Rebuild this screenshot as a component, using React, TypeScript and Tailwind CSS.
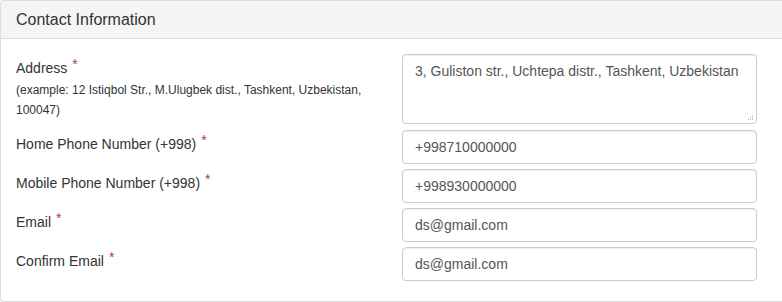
const fields = [
  { label: 'Home Phone Number (+998)', value: '+998710000000' },
  { label: 'Mobile Phone Number (+998)', value: '+998930000000' },
  { label: 'Email', value: 'ds@gmail.com' },
  { label: 'Confirm Email', value: 'ds@gmail.com' },
];

const inputCls =
  'block w-[355px] rounded-[4px] border border-[#ccc] bg-white px-[12px] py-[6px] text-[14px] leading-[20px] text-[#555] shadow-[inset_0_1px_1px_rgba(0,0,0,0.075)] outline-none';

function Req() {
  return <span className="relative top-[-4px] ml-[5px] text-[14px] text-[#a94442]">*</span>;
}

function Grip() {
  return (
    <svg className="absolute bottom-[3px] right-[3px]" width="8" height="8" viewBox="0 0 8 8">
      <rect x="6" y="2" width="1" height="1" fill="#b0b0b0" />
      <rect x="6" y="4" width="1" height="1" fill="#b0b0b0" />
      <rect x="6" y="6" width="1" height="1" fill="#b0b0b0" />
      <rect x="4" y="4" width="1" height="1" fill="#b0b0b0" />
      <rect x="4" y="6" width="1" height="1" fill="#b0b0b0" />
      <rect x="2" y="6" width="1" height="1" fill="#b0b0b0" />
    </svg>
  );
}

export default function App() {
  return (
    <div className="h-[302px] w-[782px] bg-white font-['Liberation_Sans',Arial,sans-serif] text-[14px] text-[#333]">
      <div className="w-[782px] rounded-l-[4px] border-y border-l border-[#ddd] bg-white">
        <div className="rounded-tl-[3px] border-b border-[#ddd] bg-[#f5f5f5] px-[15px] py-[10px] text-[16px] leading-[17px] text-[#333]">
          Contact Information
        </div>
        <div className="px-[15px] py-[15px]">
          <div className="mb-[6px] flex">
            <div className="w-[386px] pr-[15px] pt-[4px]">
              <div className="leading-[20px]">
                Address
                <Req />
              </div>
              <div className="mt-[3px] text-[12px] leading-[19.5px]">
                (example: 12 Istiqbol Str., M.Ulugbek dist., Tashkent, Uzbekistan, 100047)
              </div>
            </div>
            <div className="relative">
              <textarea
                className={inputCls + ' h-[70px] resize-none'}
                defaultValue="3, Guliston str., Uchtepa distr., Tashkent, Uzbekistan"
              />
              <Grip />
            </div>
          </div>
          {fields.map((f) => (
            <div key={f.label} className="mb-[5px] flex">
              <div className="w-[386px] pr-[15px] pt-[4px] leading-[20px]">
                {f.label}
                <Req />
              </div>
              <input className={inputCls + ' h-[34px]'} defaultValue={f.value} />
            </div>
          ))}
        </div>
      </div>
    </div>
  );
}
